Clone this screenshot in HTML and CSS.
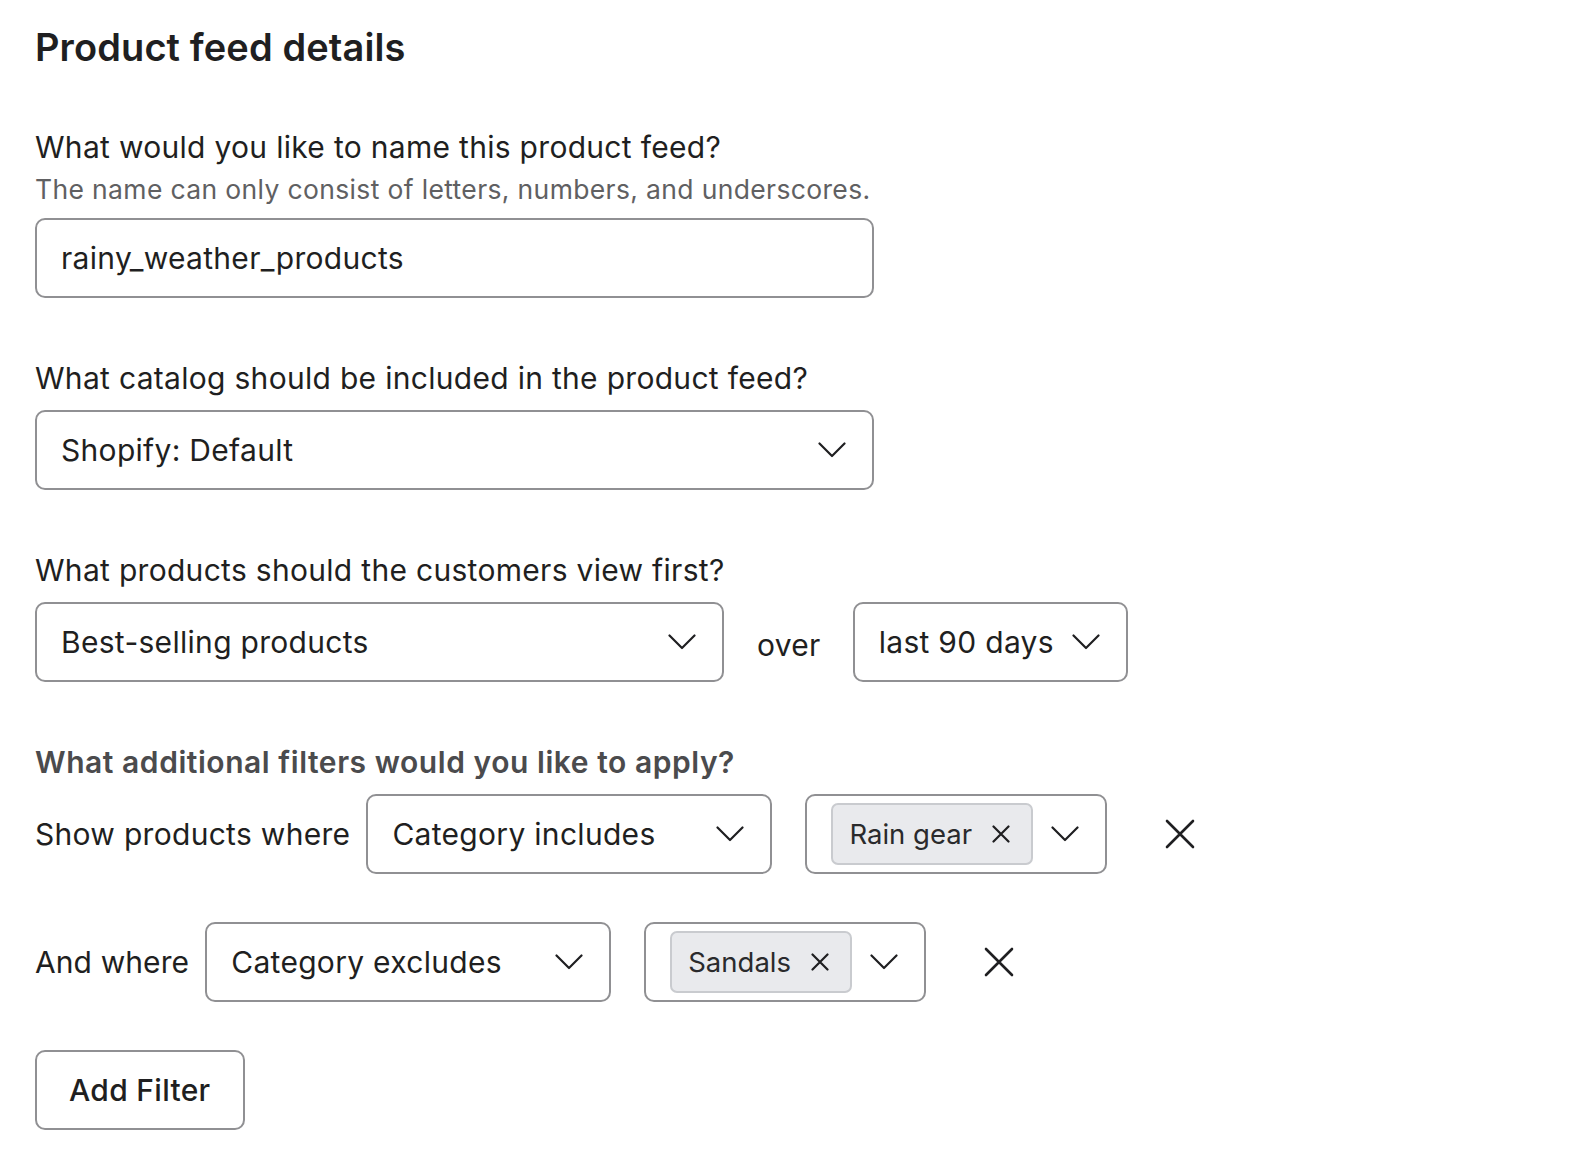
FILE: index.html
```html
<!DOCTYPE html>
<html lang="en">
<head>
<meta charset="utf-8">
<title>Product feed details</title>
<link rel="stylesheet" href="styles.css">
</head>
<body>
<main class="page">
  <h1 class="title">Product feed details</h1>

  <section class="field">
    <div class="label">What would you like to name this product feed?</div>
    <p class="hint">The name can only consist of letters, numbers, and underscores.</p>
    <div class="control input-name">rainy_weather_products</div>
  </section>

  <section class="field">
    <div class="label">What catalog should be included in the product feed?</div>
    <div class="control select select-catalog">
      <span>Shopify: Default</span>
      <svg class="chev" viewBox="0 0 28 16"><polyline points="1.5,1.5 14,14 26.5,1.5"/></svg>
    </div>
  </section>

  <section class="field">
    <div class="label">What products should the customers view first?</div>
    <div class="inline-row">
      <div class="control select select-sort">
        <span>Best-selling products</span>
        <svg class="chev" viewBox="0 0 28 16"><polyline points="1.5,1.5 14,14 26.5,1.5"/></svg>
      </div>
      <span class="over">over</span>
      <div class="control select select-period">
        <span>last 90 days</span>
        <svg class="chev" viewBox="0 0 28 16"><polyline points="1.5,1.5 14,14 26.5,1.5"/></svg>
      </div>
    </div>
  </section>

  <section class="filters">
    <div class="label label-strong">What additional filters would you like to apply?</div>

    <div class="filter-row">
      <span class="row-label">Show products where</span>
      <div class="control select select-cond">
        <span>Category includes</span>
        <svg class="chev" viewBox="0 0 28 16"><polyline points="1.5,1.5 14,14 26.5,1.5"/></svg>
      </div>
      <div class="control multi">
        <span class="chip">Rain gear
          <svg class="chip-x" viewBox="0 0 18 18"><path d="M1.5 1.5 L16.5 16.5 M16.5 1.5 L1.5 16.5"/></svg>
        </span>
        <svg class="chev" viewBox="0 0 28 16"><polyline points="1.5,1.5 14,14 26.5,1.5"/></svg>
      </div>
      <svg class="row-x" viewBox="0 0 30 30"><path d="M2 2 L28 28 M28 2 L2 28"/></svg>
    </div>

    <div class="filter-row">
      <span class="row-label row-label-short">And where</span>
      <div class="control select select-cond">
        <span>Category excludes</span>
        <svg class="chev" viewBox="0 0 28 16"><polyline points="1.5,1.5 14,14 26.5,1.5"/></svg>
      </div>
      <div class="control multi">
        <span class="chip">Sandals
          <svg class="chip-x" viewBox="0 0 18 18"><path d="M1.5 1.5 L16.5 16.5 M16.5 1.5 L1.5 16.5"/></svg>
        </span>
        <svg class="chev" viewBox="0 0 28 16"><polyline points="1.5,1.5 14,14 26.5,1.5"/></svg>
      </div>
      <svg class="row-x" viewBox="0 0 30 30"><path d="M2 2 L28 28 M28 2 L2 28"/></svg>
    </div>

    <button class="add-btn" type="button">Add Filter</button>
  </section>
</main>
</body>
</html>
```

FILE: styles.css
```css
html, body {
  margin: 0;
  padding: 0;
  background: #ffffff;
}

.page {
  padding: 27px 35px;
  font-family: Inter, "Noto Sans", "Liberation Sans", sans-serif;
  color: #1f1f21;
  letter-spacing: 0.3px;
}

.title {
  margin: 0 0 60px;
  font-size: 38px;
  line-height: 40px;
  font-weight: 600;
  letter-spacing: 0.1px;
}

.field {
  margin-bottom: 60px;
}

.label {
  font-size: 30px;
  line-height: 40px;
  margin-bottom: 12px;
}

.label-strong {
  font-weight: 600;
  color: #4b4b4d;
  letter-spacing: 0.55px;
}

.hint {
  margin: -8px 0 11px;
  font-size: 26.5px;
  line-height: 36px;
  color: #606062;
  letter-spacing: 0.35px;
}

.control {
  box-sizing: border-box;
  height: 80px;
  border: 2px solid #909093;
  border-radius: 10px;
  display: flex;
  align-items: center;
  padding: 0 26px 0 24px;
  font-size: 30px;
  background: #fff;
}

.input-name {
  width: 839px;
}

.select {
  justify-content: space-between;
}

.select-catalog {
  width: 839px;
}

.chev {
  width: 28px;
  height: 16px;
  flex: none;
  fill: none;
  stroke: #1f1f21;
  stroke-width: 2.2;
  stroke-linecap: round;
  stroke-linejoin: round;
}

.inline-row {
  display: flex;
  align-items: center;
}

.select-sort {
  width: 689px;
}

.over {
  margin: 6px 32px 0 33px;
  font-size: 30px;
}

.select-period {
  width: 275px;
  padding-right: 26px;
}

.filter-row {
  display: flex;
  align-items: center;
  margin-bottom: 48px;
}

.row-label {
  font-size: 30px;
  margin-right: 16px;
}

.row-label-short {
  letter-spacing: 0.1px;
}

.select-cond {
  width: 406px;
}

.multi {
  padding: 0 26px 0 24px;
  margin-left: 33px;
}

.chip {
  box-sizing: border-box;
  height: 62px;
  display: flex;
  align-items: center;
  gap: 20px;
  padding: 0 21px 0 16px;
  background: #e9eaed;
  border: 2px solid #c9cbcf;
  border-radius: 7px;
  font-size: 27.5px;
  letter-spacing: 0;
  color: #2a2a2c;
  margin-right: 18px;
}

.chip-x {
  width: 18px;
  height: 18px;
  fill: none;
  stroke: #1f1f21;
  stroke-width: 2.2;
  stroke-linecap: round;
}

.row-x {
  width: 30px;
  height: 30px;
  margin-left: 58px;
  fill: none;
  stroke: #1f1f21;
  stroke-width: 2.6;
  stroke-linecap: round;
}

.add-btn {
  box-sizing: border-box;
  height: 80px;
  padding: 0 32px;
  border: 2px solid #909093;
  border-radius: 10px;
  background: #fff;
  font-family: inherit;
  font-size: 30px;
  font-weight: 500;
  letter-spacing: 0.3px;
  color: #1f1f21;
  cursor: pointer;
}
```
